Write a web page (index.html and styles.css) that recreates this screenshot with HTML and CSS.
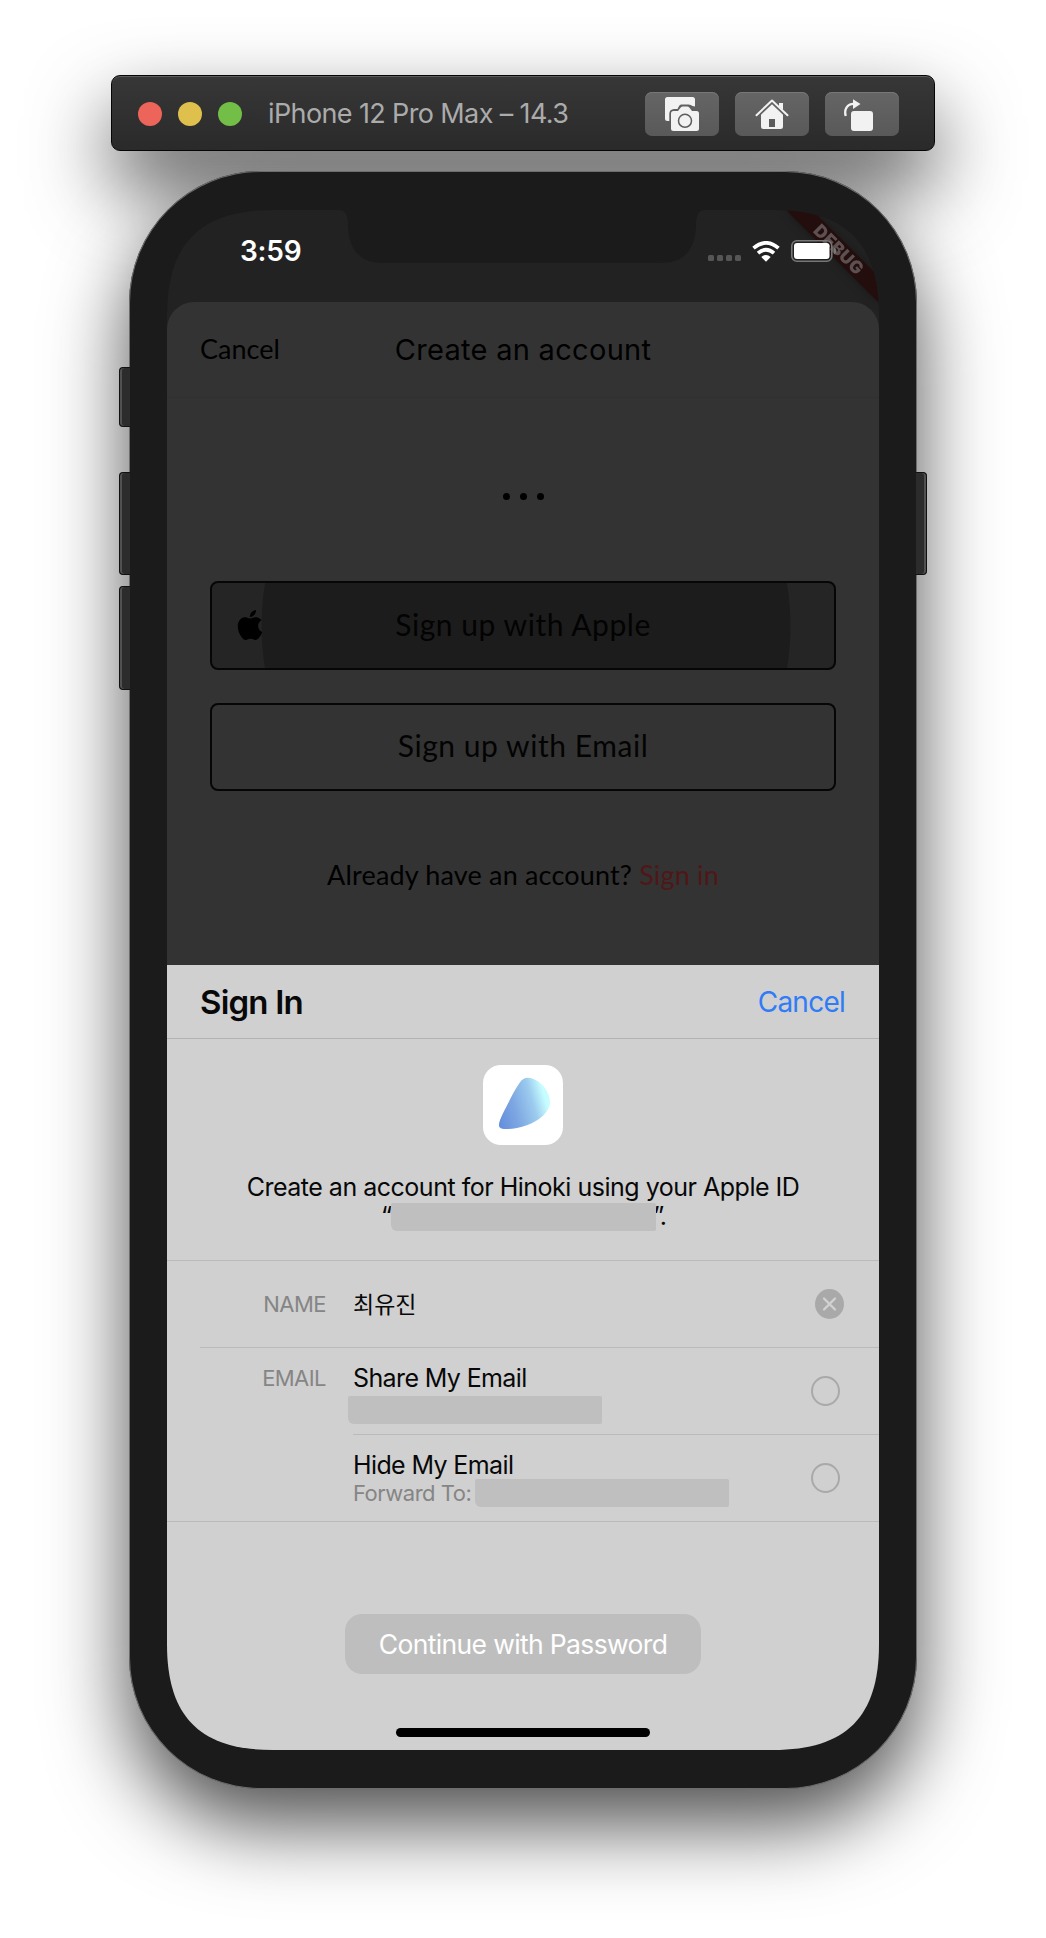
FILE: index.html
```html
<!DOCTYPE html>
<html lang="en">
<head>
<meta charset="utf-8">
<title>iPhone 12 Pro Max – 14.3</title>
<link rel="stylesheet" href="styles.css">
</head>
<body>
<main class="stage">
  <header class="toolbar">
    <span class="light red"></span><span class="light yellow"></span><span class="light green"></span>
    <h1 class="device-name">iPhone 12 Pro Max – 14.3</h1>
    <div class="tool-buttons">
      <button class="tool" aria-label="Screenshot">
        <svg viewBox="0 0 74 44"><path fill="#f2f2f2" d="M22.500 5H47.500Q50 5 50 7.500V14.500L47.500 14Q46 12.500 43.500 12.500H36Q34.500 12.800 33.500 15L32.500 17H29Q24.500 17.300 24.300 21.500V29H22.500Q20 29 20 26.500V7.500Q20 5 22.500 5Z"/><path fill="#f2f2f2" d="M28.500 19H33L35.500 15.800Q36.500 14.500 38 14.500H42Q43.500 14.500 44.500 15.800L47 19H51.500Q54 19 54 21.500V36.500Q54 39 51.500 39H28.500Q26 39 26 36.500V21.500Q26 19 28.500 19Z"/><circle cx="40" cy="28.800" r="6.500" fill="none" stroke="#5d5d5d" stroke-width="1.500"/></svg>
      </button>
      <button class="tool" aria-label="Home">
        <svg viewBox="0 0 74 44"><path fill="none" stroke="#f2f2f2" stroke-width="2" stroke-linecap="round" stroke-linejoin="round" d="M21.500 23.200L37 8.500L52.500 23.200"/><path fill="#f2f2f2" d="M44 11H48V18L44 14.500Z"/><path fill="#f2f2f2" fill-rule="evenodd" d="M37 12.300L48 22.700V34.500Q48 37 45.500 37H28.500Q26 37 26 34.500V22.700ZM34 27V35H40V27Z"/></svg>
      </button>
      <button class="tool" aria-label="Rotate">
        <svg viewBox="0 0 74 44"><rect x="26" y="19" width="22" height="20" rx="3" fill="#f2f2f2"/><path fill="none" stroke="#f2f2f2" stroke-width="2.300" d="M20.700 24C18.800 17 22.500 12 28.500 11.800"/><path fill="#f2f2f2" d="M28 7.300L35.500 12L28 17Z"/></svg>
      </button>
    </div>
  </header>

  <section class="phone">
    <i class="key mute"></i><i class="key vol-up"></i><i class="key vol-down"></i><i class="key power"></i>
    <div class="screen">
      <div class="status">
        <svg class="ribbon" viewBox="0 0 93 93"><path d="M0 0H26L93 67V93Z" fill="#230d0d"/><text x="52.500" y="46" transform="rotate(45 53 40)" text-anchor="middle">DEBUG</text></svg>
        <svg class="notch" viewBox="0 0 368 53"><path fill="#1b1b1b" d="M0 0H368Q358 0 358 13C358 38 348 53 322 53H46C20 53 10 38 10 13Q10 0 0 0Z"/></svg>
        <time class="time">3:59</time>
        <div class="status-icons">
          <svg class="cell" viewBox="0 0 33 6"><g fill="#565656"><rect width="6" height="6" rx="1.500"/><rect x="9" width="6" height="6" rx="1.500"/><rect x="18" width="6" height="6" rx="1.500"/><rect x="27" width="6" height="6" rx="1.500"/></g></svg>
          <svg class="wifi" viewBox="0 0 28 21"><g fill="none" stroke="#fff" stroke-width="3.700"><path d="M1.500 7.200Q14-3.500 26.500 7.200"/><path d="M6 12.200Q14 5.200 22 12.200"/></g><path fill="#fff" d="M9.300 16Q14 12.200 18.700 16L14 20.700Z"/></svg>
          <svg class="battery" viewBox="0 0 46 22"><rect x=".8" y=".8" width="40" height="20.400" rx="5" fill="none" stroke="#777" stroke-width="1.600"/><rect x="3" y="3" width="35.500" height="16" rx="3" fill="#fff"/><path fill="#777" d="M42.800 7.500Q45.500 8.500 45.500 11T42.800 14.500Z"/></svg>
        </div>
      </div>

      <div class="signup">
        <div class="signup-head"><a class="dismiss">Cancel</a><h2 class="signup-title">Create an account</h2></div>
        <div class="dots"><i></i><i></i><i></i></div>
        <div class="choices">
          <button class="choice pressed"><svg class="apple" viewBox="0 0 24 24"><path d="M12.152 6.896c-.948 0-2.415-1.078-3.96-1.040-2.040.027-3.910 1.183-4.961 3.014-2.117 3.675-.546 9.103 1.519 12.090 1.013 1.454 2.208 3.090 3.792 3.039 1.520-.065 2.090-.987 3.935-.987 1.831 0 2.350.987 3.960.948 1.637-.026 2.676-1.480 3.676-2.948 1.156-1.688 1.636-3.325 1.662-3.415-.039-.013-3.182-1.221-3.220-4.857-.026-3.040 2.480-4.494 2.597-4.559-1.429-2.090-3.623-2.324-4.390-2.376-2-.156-3.675 1.090-4.610 1.090zM15.530 3.830c.843-1.012 1.400-2.427 1.245-3.830-1.207.052-2.662.805-3.532 1.818-.780.896-1.454 2.338-1.273 3.714 1.338.104 2.715-.688 3.559-1.701"/></svg><span class="choice-text">Sign up with Apple</span></button>
          <button class="choice"><span class="choice-text">Sign up with Email</span></button>
        </div>
        <p class="already">Already have an account? <a class="signin">Sign in</a></p>
      </div>

      <div class="sheet">
        <div class="sheet-head"><h2 class="sheet-title">Sign In</h2><a class="sheet-cancel">Cancel</a></div>
        <div class="intro">
          <svg class="app-icon" viewBox="0 0 80 80"><defs><linearGradient id="g" gradientUnits="userSpaceOnUse" x1="16" y1="52" x2="66" y2="38"><stop offset="0" stop-color="#6690dc"/><stop offset=".35" stop-color="#7ea8e2"/><stop offset=".7" stop-color="#9ccbee"/><stop offset=".95" stop-color="#c6fdff"/></linearGradient></defs><rect width="80" height="80" rx="18" fill="#fff"/><path fill="url(#g)" d="M16 60.500C15.500 57 20 48 24 40.500C28 32.500 32.500 23.500 36.500 18C39 14 42 12.600 45 12.700C56 13.500 67 25 67 37.500C67 47 56 55.500 44.500 60C36 63 28 64.300 22.500 64C18 63.800 16 62.800 16 60.500Z"/></svg>
          <p class="intro-text">Create an account for Hinoki using your Apple ID</p>
          <p class="intro-id">“<span class="redacted id-value"></span><span class="id-end">”.</span></p>
        </div>
        <div class="row name-row"><span class="label">NAME</span><span class="korean">최유진</span>
          <svg class="clear" viewBox="0 0 29 30"><ellipse cx="14.500" cy="15" rx="14.500" ry="15" fill="#a9a9a9"/><path d="M9 9.500L20 20.500M20 9.500L9 20.500" stroke="#d2d2d2" stroke-width="2.300" stroke-linecap="round"/></svg></div>
        <div class="row share-row"><span class="label">EMAIL</span><div class="option"><span class="opt-title">Share My Email</span><span class="redacted share-value"></span></div>
          <svg class="radio" viewBox="0 0 29 30"><ellipse cx="14.500" cy="15" rx="13.500" ry="14" fill="none" stroke="#a9a9a9" stroke-width="2"/></svg></div>
        <div class="row hide-row"><div class="option"><span class="opt-title">Hide My Email</span><span class="forward"><span class="forward-label">Forward To:</span><span class="redacted forward-value"></span></span></div>
          <svg class="radio" viewBox="0 0 29 30"><ellipse cx="14.500" cy="15" rx="13.500" ry="14" fill="none" stroke="#a9a9a9" stroke-width="2"/></svg></div>
        <div class="actions"><button class="continue">Continue with Password</button><i class="home-bar"></i></div>
      </div>
    </div>
  </section>
</main>
</body>
</html>
```

FILE: styles.css
```css
* { box-sizing: border-box; }
body { margin: 0; background: #fff; font-family: Inter, "Noto Sans CJK KR", sans-serif; }
h1, h2, p { margin: 0; font-weight: 400; }
button { font: inherit; border: 0; padding: 0; }
svg { display: block; }
span, a, h1, h2, p, time, button { white-space: nowrap; }

.stage { isolation: isolate; width: 1046px; height: 1938px; overflow: hidden; padding-top: 75px; display: flex; flex-direction: column; align-items: center; gap: 20px; }

.toolbar { position: relative; width: 824px; height: 76px; display: flex; align-items: center; padding: 2px 35px 0 26px; gap: 16px; border: 1px solid #050505; border-radius: 9px; background: linear-gradient(#373737, #2a2a2a); box-shadow: inset 0 1px 0 #5c5c5c; }
.toolbar::before, .phone::before { content: ""; position: absolute; inset: 0; z-index: -1; border-radius: inherit; box-shadow: 0 36px 80px rgba(0, 0, 0, .69); }
.light { width: 24px; height: 24px; border-radius: 50%; }
.red { background: #ed655a; }
.yellow { background: #e0c04c; }
.green { background: #72be47; }
.device-name { margin-left: 10px; font-size: 27px; line-height: 32px; color: #ababab; letter-spacing: -.62px; }
.tool-buttons { display: flex; gap: 16px; margin-left: auto; }
.tool { width: 74px; height: 44px; border-radius: 7px; background: linear-gradient(#656565, #595959); box-shadow: inset 0 1px 0 #777; }

.phone { position: relative; width: 788px; height: 1618px; padding: 39px 38px; border-radius: 132px; background: #1b1b1b; box-shadow: inset 0 0 0 1px #6d6d6d; }
.key { position: absolute; left: -10px; width: 11px; border: 1px solid #111; border-right: 0; border-radius: 4px 0 0 4px; background: #2c2c2c; box-shadow: inset 2px 0 0 #515151; }
.mute { top: 196px; height: 60px; }
.vol-up { top: 301px; height: 103px; }
.vol-down { top: 415px; height: 104px; }
.power { top: 301px; height: 103px; left: auto; right: -10px; transform: scaleX(-1); }

.screen { width: 712px; height: 1540px; display: flex; flex-direction: column; background: #222; clip-path: path("M0 106C0 33 33 0 106 0H606C679 0 712 33 712 106V1434C712 1507 679 1540 606 1540H106C33 1540 0 1507 0 1434Z"); }
.status { position: relative; height: 92px; flex: none; display: flex; justify-content: space-between; }
.ribbon { position: absolute; right: 0; top: 0; width: 93px; height: 93px; filter: drop-shadow(0 0 5px rgba(0, 0, 0, .3)); }
.ribbon text { font-size: 17.5px; font-weight: 900; fill: #5d5050; letter-spacing: .3px; }
.notch { position: absolute; left: 171px; top: 0; width: 368px; height: 53px; }
.time { margin: 25px 0 0 73px; font-size: 28px; line-height: 32px; font-weight: 600; color: #fff; letter-spacing: -.2px; position: relative; }
.status-icons { position: relative; display: flex; gap: 11px; margin: 30px 42px 0 0; height: 22px; align-items: center; }
.cell { width: 33px; height: 6px; margin-top: 14px; }
.wifi { width: 28px; height: 21px; }
.battery { width: 46px; height: 22px; }

.signup { height: 663px; flex: none; border-radius: 27px 27px 0 0; background: #333; font-family: Lato, sans-serif; color: #000; }
.signup-head { height: 96px; display: grid; grid-template-columns: 1fr auto 1fr; align-items: center; padding: 0 33px; border-bottom: 1px solid #303030; }
.dismiss { margin-top: -2px; font-size: 27px; line-height: 32px; }
.signup-title { font-family: Inter, sans-serif; font-size: 29px; line-height: 34px; letter-spacing: .3px; }
.dots { display: flex; justify-content: center; gap: 10px; margin-top: 95px; }
.dots i { width: 7px; height: 7px; border-radius: 50%; background: #000; }
.choices { margin: 81px 43px 0; display: grid; gap: 33px; }
.choice { position: relative; height: 88.500px; border: 2px solid #060606; border-radius: 8px; background: transparent; font-size: 30px; color: #030303; font-weight: 400; }
.choice-text { display: block; letter-spacing: .55px; padding-bottom: 3px; }
.pressed { background: radial-gradient(circle at 314px 43px, #1c1c1c 264px, #252525 265px); }
.apple { position: absolute; left: 23px; top: 27px; width: 30px; height: 30px; }
.already { margin-top: 67px; text-align: center; font-size: 27px; line-height: 34px; letter-spacing: .17px; }
.signin { color: #4f1717; }

.sheet { height: 785px; flex: none; background: #d0d0d0; color: #080808; display: flex; flex-direction: column; }
.sheet-head { height: 74px; display: flex; justify-content: space-between; align-items: center; padding: 0 34px 0 33px; border-bottom: 1px solid #b2b2b2; }
.sheet-title { font-size: 33px; line-height: 40px; font-weight: 600; letter-spacing: -.8px; }
.sheet-cancel { font-size: 28px; line-height: 34px; color: #2f7cf6; letter-spacing: -.75px; }
.intro { height: 222px; padding-top: 26px; border-bottom: 1px solid #bababa; display: flex; flex-direction: column; align-items: center; }
.app-icon { width: 80px; height: 80px; }
.intro-text { margin-top: 28px; font-size: 25px; line-height: 29px; letter-spacing: -.49px; }
.intro-id { font-size: 25px; line-height: 29px; letter-spacing: -1px; display: flex; align-items: center; }
.redacted { display: block; background: #bfbfbf; border-radius: 2px 2px 2px 6px; }
.id-value { width: 265px; height: 28px; position: relative; }
.id-end { margin-left: -3px; letter-spacing: -2px; }
.row { height: 87px; display: grid; grid-template-columns: 159px 1fr 29px; column-gap: 27px; align-items: center; padding-right: 39px; border-bottom: 1px solid #bababa; }
.label { font-size: 22px; line-height: 28px; text-align: right; color: #858585; letter-spacing: -.55px; }
.name-row { padding-right: 35px; margin-left: 33px; grid-template-columns: 126px 1fr 29px; }
.korean { font-family: "Noto Sans CJK KR", sans-serif; font-size: 23px; line-height: 30px; margin-top: -2px; }
.share-row .label { align-self: start; margin-top: 16px; }
.hide-row { grid-template-columns: 1fr 29px; padding-left: 186px; }
.share-row { border-bottom: 0; padding-bottom: 1px; background: linear-gradient(#bababa, #bababa) 186px 100% / 526px 1px no-repeat; }
.option { align-self: start; display: flex; flex-direction: column; padding-top: 16px; }
.opt-title { font-size: 25px; line-height: 28px; letter-spacing: -.62px; }
.share-value { width: 254px; height: 28px; margin: 4px 0 0 -5px; }
.forward { display: flex; align-items: center; gap: 5px; font-size: 22px; line-height: 28px; color: #858585; letter-spacing: -.5px; }
.forward-label { width: 117px; }
.forward-value { width: 254px; height: 28px; }
.clear, .radio { width: 29px; height: 30px; }
.actions { display: flex; flex-direction: column; align-items: center; }
.continue { margin-top: 92px; width: 356px; height: 60px; border-radius: 17px; background: #bebebe; color: #fff; font-size: 26.5px; line-height: 32px; letter-spacing: -.65px; }
.home-bar { margin-top: 54px; width: 254px; height: 9px; border-radius: 5px; background: #000; }
```
